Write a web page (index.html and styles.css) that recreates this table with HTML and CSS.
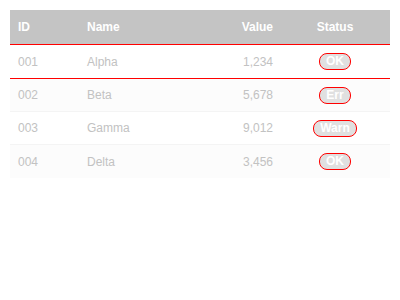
FILE: index.html
```html
<!DOCTYPE html>
<html>
<head>
<meta charset="utf-8">
<link rel="stylesheet" href="styles.css">
</head>
<body>
<table class="grid">
  <colgroup>
    <col class="c-id"><col class="c-name"><col class="c-value"><col class="c-status">
  </colgroup>
  <thead>
    <tr><th>ID</th><th>Name</th><th class="num">Value</th><th class="center">Status</th></tr>
  </thead>
  <tbody>
    <tr class="first"><td>001</td><td>Alpha</td><td class="num">1,234</td><td class="center"><span class="badge">OK</span></td></tr>
    <tr><td>002</td><td>Beta</td><td class="num">5,678</td><td class="center"><span class="badge">Err</span></td></tr>
    <tr><td>003</td><td>Gamma</td><td class="num">9,012</td><td class="center"><span class="badge">Warn</span></td></tr>
    <tr><td>004</td><td>Delta</td><td class="num">3,456</td><td class="center"><span class="badge">OK</span></td></tr>
  </tbody>
</table>
</body>
</html>
```
FILE: styles.css
```css
body {
  margin: 10px;
  background: #fff;
  font-family: "Liberation Sans", Arial, sans-serif;
  font-size: 12px;
}
.grid {
  width: 380px;
  border-collapse: separate;
  border-spacing: 0;
  table-layout: fixed;
}
.c-id { width: 69px; }
.c-value { width: 80px; }
.c-status { width: 110px; }
th {
  background: #c4c4c4;
  color: #fff;
  font-weight: bold;
  text-align: left;
  height: 35px;
  padding: 0 8px;
  border-bottom: 1px solid #ff0000;
  box-sizing: border-box;
}
td {
  color: #c2c2c2;
  height: 33px;
  padding: 0 8px;
  border-bottom: 1px solid #f4f4f4;
  box-sizing: border-box;
}
th.num, td.num { text-align: right; padding-right: 7px; }
tbody tr:nth-child(even) td { background: #fcfcfc; }
tbody tr.first td { border-bottom-color: #ff0000; height: 34px; }
tbody tr:last-child td { border-bottom: none; }
.center { text-align: center; }
.badge {
  display: inline-block;
  background: #e0e0e0;
  color: #fff;
  font-weight: bold;
  font-size: 12px;
  line-height: 15px;
  padding: 0 6px;
  border: 1px solid #ff0000;
  border-radius: 8px;
}
```
